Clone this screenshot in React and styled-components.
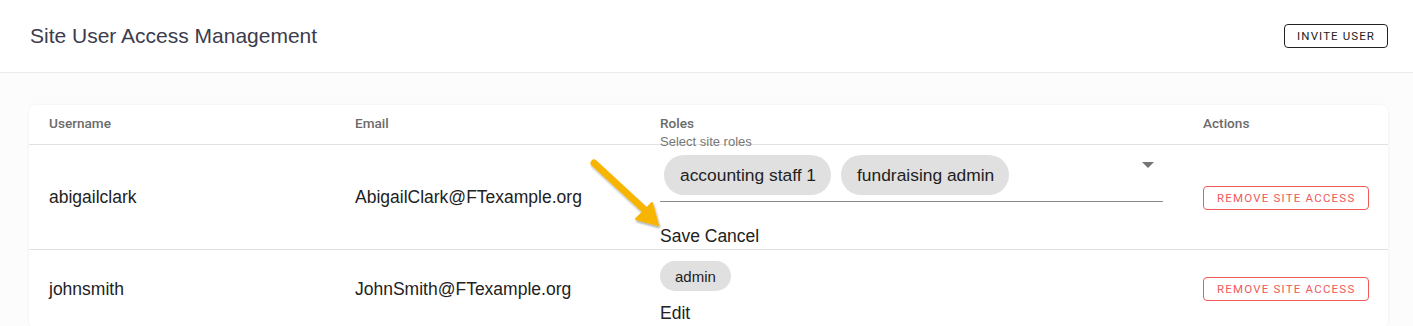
import React from "react";
import styled, { createGlobalStyle } from "styled-components";

const Global = createGlobalStyle`
  html, body { margin: 0; padding: 0; background: #fcfcfc; }
  body { font-family: "Liberation Sans", Arial, sans-serif; color: #212121; }
  * { box-sizing: border-box; }
`;

const Page = styled.div`
  width: 1413px;
  min-height: 326px;
  background: #fcfcfc;
`;

const TopBar = styled.header`
  height: 73px;
  background: #fff;
  border-bottom: 1px solid #ebebee;
  display: flex;
  align-items: center;
  justify-content: space-between;
  padding: 0 25px 0 30px;
`;

const Title = styled.h1`
  margin: 0;
  font-family: "Liberation Sans", Arial, sans-serif;
  font-weight: 400;
  font-size: 21px;
  color: #3c3c4e;
`;

const OutlineButton = styled.button`
  font-family: Roboto, "Liberation Sans", sans-serif;
  font-size: 11.5px;
  letter-spacing: ${(p) => p.$ls || 1.2}px;
  text-transform: uppercase;
  background: transparent;
  border: 1px solid ${(p) => p.$color};
  color: ${(p) => p.$color};
  border-radius: 4px;
  height: 24px;
  padding: 0 ${(p) => p.$pad || 13}px;
  display: inline-flex;
  align-items: center;
  cursor: pointer;
`;

const Content = styled.main`
  padding: 32px 25px 0 29px;
`;

const Card = styled.section`
  background: #fff;
  border-radius: 6px;
  box-shadow: 0 0 3px rgba(0, 0, 0, 0.06);
`;

const Row = styled.div`
  display: grid;
  grid-template-columns: 306px 305px 543px 1fr;
  align-items: center;
  height: ${(p) => p.$h}px;
  border-bottom: ${(p) => (p.$last ? "none" : "1px solid #e2e2e2")};
  padding-left: 20px;
`;

const HeadCell = styled.div`
  font-family: Roboto, "Liberation Sans", sans-serif;
  font-size: 13.6px;
  font-weight: 500;
  color: #6b6b6b;
  padding-bottom: 3px;
`;

const Cell = styled.div`
  font-size: 17.5px;
  color: #222;
`;

const RolesCell = styled.div`
  position: relative;
  align-self: stretch;
  display: flex;
  flex-direction: column;
  align-items: flex-start;
  padding-top: ${(p) => p.$pt}px;
`;

const SelectBox = styled.div`
  position: relative;
  width: 503px;
  height: 57px;
  border-bottom: 1px solid #8a8a8a;
  display: flex;
  align-items: flex-start;
  gap: 10px;
  padding: 10px 0 0 4px;
`;

const FloatLabel = styled.span`
  position: absolute;
  left: 0;
  top: -11px;
  font-size: 13px;
  color: #777;
`;

const Chip = styled.span`
  display: inline-flex;
  align-items: center;
  height: ${(p) => (p.$big ? 40 : 30)}px;
  padding: 0 15px 0 ${(p) => (p.$big ? 16 : 15)}px;
  border-radius: 20px;
  background: #e0e0e0;
  font-size: ${(p) => (p.$big ? 17.4 : 15)}px;
  color: #222;
  white-space: nowrap;
`;

const Caret = styled.span`
  position: absolute;
  right: 9px;
  top: 17px;
  width: 0;
  height: 0;
  border-left: 6px solid transparent;
  border-right: 6px solid transparent;
  border-top: 6px solid #757575;
`;

const TextLinks = styled.div`
  font-size: 17.5px;
  color: #222;
  margin-top: ${(p) => p.$mt}px;
`;

const Arrow = styled.svg`
  position: absolute;
  left: -72px;
  top: 12px;
  overflow: visible;
`;

const ActionCell = styled.div`
  padding-top: ${(p) => p.$pt || 0}px;
`;

function PointerArrow() {
  return (
    <Arrow width="80" height="80" viewBox="0 0 80 80">
      <defs>
        <filter id="sh" x="-30%" y="-30%" width="160%" height="160%">
          <feDropShadow dx="1" dy="2" stdDeviation="1.2" floodColor="#000" floodOpacity="0.35" />
        </filter>
      </defs>
      <g filter="url(#sh)">
        <line x1="6" y1="6" x2="58" y2="54" stroke="#f8b500" strokeWidth="7" strokeLinecap="round" />
        <polygon points="70,68 48,62 64,46" fill="#f8b500" stroke="#f8b500" strokeWidth="2" strokeLinejoin="round" />
      </g>
    </Arrow>
  );
}

const RED = "#f05a5a";

export default function App() {
  return (
    <Page>
      <Global />
      <TopBar>
        <Title>Site User Access Management</Title>
        <OutlineButton $color="#222" $pad={12} $ls={1.1}>Invite User</OutlineButton>
      </TopBar>
      <Content>
        <Card>
          <Row $h={40}>
            <HeadCell>Username</HeadCell>
            <HeadCell>Email</HeadCell>
            <HeadCell>Roles</HeadCell>
            <HeadCell>Actions</HeadCell>
          </Row>
          <Row $h={105}>
            <Cell>abigailclark</Cell>
            <Cell>AbigailClark@FTexample.org</Cell>
            <RolesCell $pt={0}>
              <PointerArrow />
              <SelectBox>
                <FloatLabel>Select site roles</FloatLabel>
                <Chip $big>accounting staff 1</Chip>
                <Chip $big>fundraising admin</Chip>
                <Caret />
              </SelectBox>
              <TextLinks $mt={24}>Save Cancel</TextLinks>
            </RolesCell>
            <ActionCell $pt={2}>
              <OutlineButton $color={RED} $pad={13}>Remove Site Access</OutlineButton>
            </ActionCell>
          </Row>
          <Row $h={78} $last>
            <Cell>johnsmith</Cell>
            <Cell>JohnSmith@FTexample.org</Cell>
            <RolesCell $pt={11}>
              <Chip>admin</Chip>
              <TextLinks $mt={12}>Edit</TextLinks>
            </RolesCell>
            <ActionCell>
              <OutlineButton $color={RED} $pad={13}>Remove Site Access</OutlineButton>
            </ActionCell>
          </Row>
        </Card>
      </Content>
    </Page>
  );
}
